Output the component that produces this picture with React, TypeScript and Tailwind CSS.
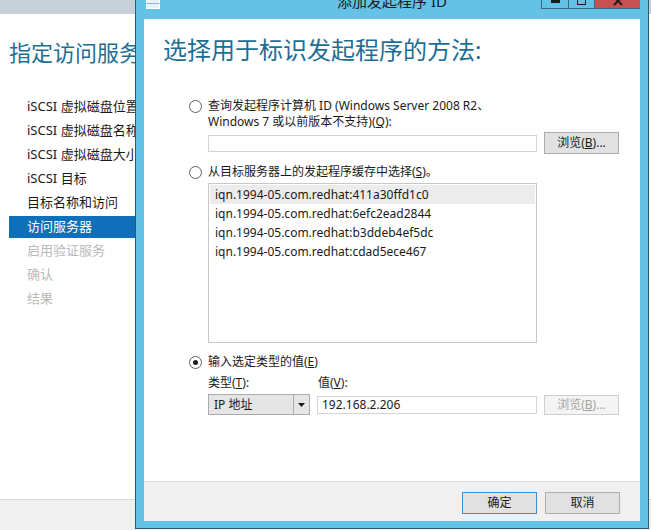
import React from "react";

const F = "font-['Noto_Sans','Noto_Sans_CJK_SC',sans-serif]";

function Radio({ checked }: { checked?: boolean }) {
  return (
    <span className="mt-[1.5px] flex h-[13px] w-[13px] shrink-0 items-center justify-center rounded-full border border-[#606060] bg-white">
      {checked && <span className="h-[5px] w-[5px] rounded-full bg-[#1a1a1a]" />}
    </span>
  );
}

function Btn({ children, def, disabled }: { children: React.ReactNode; def?: boolean; disabled?: boolean }) {
  const cls = disabled
    ? "border-[#cfcfcf] bg-[#f4f4f4] text-[#a3a3a3]"
    : def
    ? "border-[#3c8fd6] bg-[#e1e1e1] text-[#1a1a1a]"
    : "border-[#adadad] bg-[#e1e1e1] text-[#1a1a1a]";
  return (
    <div className={`flex h-[22px] w-[75px] shrink-0 items-center justify-center border text-[12px] leading-[16px] ${cls}`}>
      {children}
    </div>
  );
}

export default function App() {
  const nav = [
    { t: "iSCSI 虚拟磁盘位置", s: "n" },
    { t: "iSCSI 虚拟磁盘名称", s: "n" },
    { t: "iSCSI 虚拟磁盘大小", s: "n" },
    { t: "iSCSI 目标", s: "n" },
    { t: "目标名称和访问", s: "n" },
    { t: "访问服务器", s: "a" },
    { t: "启用验证服务", s: "d" },
    { t: "确认", s: "d" },
    { t: "结果", s: "d" },
  ];
  const items = [
    "iqn.1994-05.com.redhat:411a30ffd1c0",
    "iqn.1994-05.com.redhat:6efc2ead2844",
    "iqn.1994-05.com.redhat:b3ddeb4ef5dc",
    "iqn.1994-05.com.redhat:cdad5ece467",
  ];
  return (
    <div className={`relative h-[530px] w-[651px] overflow-hidden bg-white ${F}`}>
      {/* background wizard window */}
      <div className="flex h-full flex-col">
        <div className="h-[14px] shrink-0 bg-[#c8d0d7]" />
        <div className="flex-1 bg-white">
          <div className="ml-[9px] mt-[23px] h-[30px] whitespace-nowrap text-[22px] leading-[30px] text-[#1e6e93]">
            指定访问服务器
          </div>
          <div className="mt-[29px] flex flex-col gap-[2px] pl-[9px]">
            {nav.map((n) => (
              <div
                key={n.t}
                className={`flex h-[22px] w-[140px] items-center whitespace-nowrap pl-[18px] text-[13px] ${
                  n.s === "a"
                    ? "bg-[#0f6fb9] text-white"
                    : n.s === "d"
                    ? "text-[#b9b9b9]"
                    : "text-[#1a1a1a]"
                }`}
              >
                {n.t}
              </div>
            ))}
          </div>
        </div>
        <div className="h-[31px] shrink-0 border-t border-[#d9d9d9] bg-[#f0f0f0]" />
      </div>

      {/* dialog */}
      <div className="absolute left-[135px] top-[-12px] flex h-[541px] w-[514px] flex-col border border-[#2c5a71] bg-[#64c2e6]">
        <div className="relative h-[30px] shrink-0">
          <svg className="absolute left-[9px] top-[5px]" width="16" height="16" viewBox="0 0 16 16">
            <rect x="1.5" y="5.5" width="13" height="9" fill="#e8f2f8" stroke="#ffffff" />
            <path d="M5.5 5.5 V3.5 H10.5 V5.5" fill="none" stroke="#ffffff" />
            <path d="M1.5 9.5 H14.5" stroke="#8fb6cc" />
          </svg>
          <div className="absolute left-0 right-0 top-[2px] text-center text-[15px] leading-[20px] text-[#1a1a1a]">
            添加发起程序 ID
          </div>
          <div className="absolute right-[8px] top-0 flex h-[20px]">
            <div className="relative h-[20px] w-[27px] border-b border-l border-[#3b6a84]">
              <div className="absolute left-[9px] top-[10px] h-[4px] w-[9px] bg-[#1a1a1a]" />
            </div>
            <div className="relative h-[20px] w-[26px] border-b border-l border-[#3b6a84]">
              <div className="absolute left-[8px] top-[7px] h-[9px] w-[9px] border border-t-[3px] border-[#1a1a1a]" />
            </div>
            <div className="flex h-[20px] w-[46px] items-center justify-center border-b border-l border-[#3b6a84] bg-[#c75050]">
              <svg width="10" height="10" viewBox="0 0 10 10" className="mt-[4px]">
                <path d="M1 1 L9 9 M9 1 L1 9" stroke="#2a1a1a" strokeWidth="2" />
              </svg>
            </div>
          </div>
        </div>

        <div className="mx-[8px] flex h-[502px] flex-col bg-white">
          <div className="flex flex-1 flex-col pl-[19px]">
            <div className="mt-[16px] h-[30px] whitespace-nowrap text-[24px] leading-[30px] text-[#1e6e93]">
              选择用于标识发起程序的方法:
            </div>

            <div className="ml-[26px] mt-[33px] flex flex-col text-[12px] leading-[16px] text-[#1a1a1a]">
              <div className="flex gap-[6px]">
                <Radio />
                <div>
                  <div className="whitespace-nowrap">查询发起程序计算机 ID (Windows Server 2008 R2、</div>
                  <div className="whitespace-nowrap">
                    Windows 7 或以前版本不支持)(<u>Q</u>):
                  </div>
                </div>
              </div>
              <div className="ml-[19px] mt-[2px] flex h-[22px] items-center gap-[7px]">
                <div className="h-[17px] w-[329px] border border-[#d4d4d4] bg-white" />
                <Btn>
                  浏览(<u>B</u>)...
                </Btn>
              </div>

              <div className="mt-[10px] flex gap-[6px]">
                <Radio />
                <div className="whitespace-nowrap">
                  从目标服务器上的发起程序缓存中选择(<u>S</u>)。
                </div>
              </div>
              <div className="ml-[19px] mt-[3px] flex h-[160px] w-[329px] flex-col border border-[#c8c8c8] bg-white p-[1px]">
                {items.map((it, i) => (
                  <div
                    key={it}
                    className={`flex h-[19px] items-center whitespace-nowrap pl-[5px] ${
                      i === 0 ? "bg-[#ececec]" : ""
                    }`}
                  >
                    {it}
                  </div>
                ))}
              </div>

              <div className="mt-[11px] flex gap-[6px]">
                <Radio checked />
                <div className="whitespace-nowrap">
                  输入选定类型的值(<u>E</u>)
                </div>
              </div>
              <div className="ml-[19px] mt-[5px] flex">
                <div className="w-[110px] whitespace-nowrap">
                  类型(<u>T</u>):
                </div>
                <div className="whitespace-nowrap">
                  值(<u>V</u>):
                </div>
              </div>
              <div className="ml-[19px] mt-[3px] flex h-[21px] items-center gap-[7px]">
                <div className="flex h-[21px] w-[102px] border border-[#acacac] bg-[#e5e5e5]">
                  <div className="flex flex-1 items-center pl-[5px]">IP 地址</div>
                  <div className="flex w-[16px] items-center justify-center border-l border-[#acacac]">
                    <svg width="7" height="4" viewBox="0 0 7 4">
                      <path d="M0 0 H7 L3.5 4 Z" fill="#1a1a1a" />
                    </svg>
                  </div>
                </div>
                <div className="flex h-[18px] w-[220px] items-center border border-[#d4d4d4] bg-white pl-[4px]">
                  192.168.2.206
                </div>
                <div className="flex h-[20px] w-[75px] items-center justify-center border border-[#cfcfcf] bg-[#f4f4f4] text-[#a3a3a3]">
                  浏览(<u>B</u>)...
                </div>
              </div>
            </div>
          </div>

          <div className="flex h-[40px] shrink-0 justify-end gap-[8px] border-t border-[#dfdfdf] bg-[#f0f0f0] pr-[20px] pt-[10px]">
            <Btn def>确定</Btn>
            <Btn>取消</Btn>
          </div>
        </div>
      </div>
    </div>
  );
}
